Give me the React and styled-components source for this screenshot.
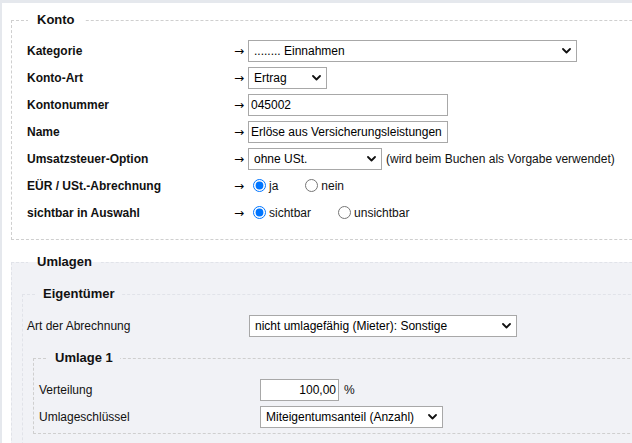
import React from 'react';
import styled, { createGlobalStyle } from 'styled-components';

const Global = createGlobalStyle`
  html, body { margin: 0; padding: 0; overflow: hidden; background: #e5e8ed; }
  body {
    font-family: "Liberation Sans", Arial, Helvetica, sans-serif;
    font-size: 12px;
    color: #000;
  }
  * { box-sizing: border-box; }
`;

const Page = styled.div`
  margin: 3px 0 0 2px;
  width: 720px;
  min-height: 460px;
  background: #fff;
  padding: 9px 0 20px 9px;
`;

const Fieldset = styled.fieldset`
  margin: ${p => p.$margin || '0'};
  padding: ${p => p.$pad};
  border: 1px dashed ${p => p.$line};
  background: ${p => p.$bg || 'transparent'};
  min-width: 0;
`;

const Legend = styled.legend`
  margin-left: ${p => p.$offset}px;
  padding: 0 ${p => p.$space}px;
  font-weight: bold;
  font-size: 13px;
  line-height: 16px;
  color: #111;
`;

const FormGrid = styled.div`
  display: grid;
  grid-template-columns: ${p => p.$cols};
  grid-auto-rows: 27px;
  align-items: center;
`;

const Label = styled.div`
  font-weight: ${p => (p.$bold ? 'bold' : 'normal')};
  font-size: 12px;
  color: #111;
  white-space: nowrap;
`;

const Arrow = styled.div`
  text-align: right;
  padding-right: 4px;
  font-family: "DejaVu Sans", sans-serif;
  font-size: 12px;
  line-height: 12px;
  color: #000;
`;

const Control = styled.div`
  display: flex;
  align-items: center;
  white-space: nowrap;
`;

const SelectWrap = styled.span`
  position: relative;
  display: inline-block;
  width: ${p => p.$w}px;
  height: 22px;
`;

const NativeSelect = styled.select`
  appearance: none;
  -webkit-appearance: none;
  width: 100%;
  height: 100%;
  margin: 0;
  border: 1px solid #a8a8a8;
  border-radius: 0;
  background: #fff;
  color: #000;
  font: 12px "Liberation Sans", Arial, sans-serif;
  padding: 0 20px 0 5px;
  outline: none;
`;

const Chevron = styled.svg`
  position: absolute;
  right: 6px;
  top: 50%;
  margin-top: -3px;
  pointer-events: none;
`;

const TextInput = styled.input`
  width: ${p => p.$w}px;
  height: 22px;
  margin: 0;
  border: 1px solid #a8a8a8;
  border-radius: 0;
  padding: 0 2px;
  font: 12px "Liberation Sans", Arial, sans-serif;
  color: #000;
  text-align: ${p => p.$align || 'left'};
  outline: none;
`;

const Hint = styled.span`
  margin-left: ${p => p.$gap}px;
  font-size: 12px;
  color: #111;
`;

const RadioGroup = styled.div`
  display: flex;
  align-items: center;
  gap: 22px;
`;

const RadioOption = styled.label`
  display: inline-flex;
  align-items: center;
  font-size: 12px;
  color: #111;
`;

const Radio = styled.input.attrs({ type: 'radio' })`
  width: 13px;
  height: 13px;
  margin: 0 3px 0 5px;
`;

function Select({ w, value, options }) {
  return (
    <SelectWrap $w={w}>
      <NativeSelect defaultValue={value}>
        {(options || [value]).map(o => (
          <option key={o} value={o}>{o}</option>
        ))}
      </NativeSelect>
      <Chevron width="9" height="6" viewBox="0 0 9 6">
        <path d="M1 1 L4.5 4.5 L8 1" fill="none" stroke="#111" strokeWidth="1.8" strokeLinecap="round" strokeLinejoin="round" />
      </Chevron>
    </SelectWrap>
  );
}

function KontoRow({ label, children }) {
  return (
    <>
      <Label $bold>{label}</Label>
      <Arrow>→</Arrow>
      <Control>{children}</Control>
    </>
  );
}

export default function App() {
  return (
    <>
      <Global />
      <Page>
        <Fieldset $line="#cfcfcf" $pad="9px 0 13px 15px">
          <Legend $offset={1} $space={9}>Konto</Legend>
          <FormGrid $cols="204px 17px 1fr">
            <KontoRow label="Kategorie">
              <Select w={329} value="........ Einnahmen" />
            </KontoRow>
            <KontoRow label="Konto-Art">
              <Select w={79} value="Ertrag" options={['Ertrag', 'Aufwand']} />
            </KontoRow>
            <KontoRow label="Kontonummer">
              <TextInput $w={200} defaultValue="045002" />
            </KontoRow>
            <KontoRow label="Name">
              <TextInput $w={200} defaultValue="Erlöse aus Versicherungsleistungen" />
            </KontoRow>
            <KontoRow label="Umsatzsteuer-Option">
              <Select w={134} value="ohne USt." />
              <Hint $gap={4}>(wird beim Buchen als Vorgabe verwendet)</Hint>
            </KontoRow>
            <KontoRow label="EÜR / USt.-Abrechnung">
              <RadioGroup>
                <RadioOption><Radio name="eur" defaultChecked />ja</RadioOption>
                <RadioOption><Radio name="eur" />nein</RadioOption>
              </RadioGroup>
            </KontoRow>
            <KontoRow label="sichtbar in Auswahl">
              <RadioGroup>
                <RadioOption><Radio name="vis" defaultChecked />sichtbar</RadioOption>
                <RadioOption><Radio name="vis" />unsichtbar</RadioOption>
              </RadioGroup>
            </KontoRow>
          </FormGrid>
        </Fieldset>

        <Fieldset $line="#e1e3e9" $bg="#f1f2f6" $margin="14px 0 0 0" $pad="16px 0 40px 10px">
          <Legend $offset={6} $space={9}>Umlagen</Legend>
          <Fieldset $line="#e1e3e9" $pad="10px 0 30px 4px">
            <Legend $offset={9} $space={7}>Eigentümer</Legend>
            <FormGrid $cols="222px 1fr">
              <Label>Art der Abrechnung</Label>
              <Control>
                <Select w={268} value="nicht umlagefähig (Mieter): Sonstige" />
              </Control>
            </FormGrid>
            <Fieldset $line="#cfcfcf" $margin="11px 0 0 6px" $pad="10px 0 3px 5px">
              <Legend $offset={9} $space={7}>Umlage 1</Legend>
              <FormGrid $cols="221px 1fr">
                <Label>Verteilung</Label>
                <Control>
                  <TextInput $w={79} $align="right" defaultValue="100,00" />
                  <Hint $gap={5}>%</Hint>
                </Control>
                <Label>Umlageschlüssel</Label>
                <Control>
                  <Select w={183} value="Miteigentumsanteil (Anzahl)" />
                </Control>
              </FormGrid>
            </Fieldset>
          </Fieldset>
        </Fieldset>
      </Page>
    </>
  );
}
